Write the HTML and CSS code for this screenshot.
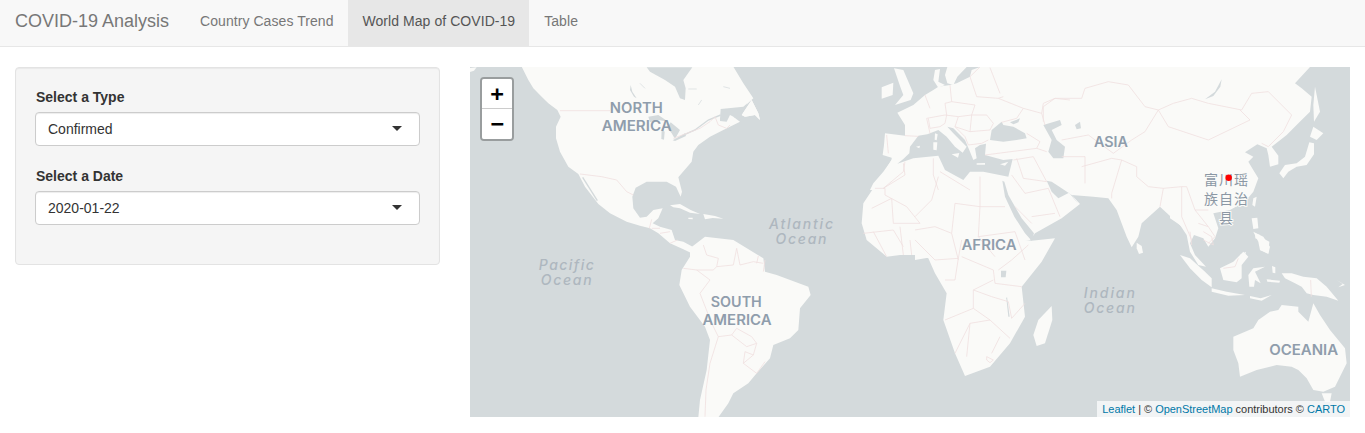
FILE: index.html
```html
<!DOCTYPE html>
<html lang="en">
<head>
<meta charset="utf-8">
<title>COVID-19 Analysis</title>
<link rel="stylesheet" href="styles.css">
</head>
<body>
<nav class="navbar">
  <span class="brand">COVID-19 Analysis</span>
  <ul class="nav">
    <li><a href="#">Country Cases Trend</a></li>
    <li class="active"><a href="#">World Map of COVID-19</a></li>
    <li><a href="#">Table</a></li>
  </ul>
</nav>
<main class="content">
  <aside class="well">
    <div class="field">
      <label>Select a Type</label>
      <div class="select"><span>Confirmed</span><i class="caret"></i></div>
    </div>
    <div class="field">
      <label>Select a Date</label>
      <div class="select"><span>2020-01-22</span><i class="caret"></i></div>
    </div>
  </aside>
  <section class="map">
    <svg class="world" viewBox="470 67 880 350" width="880" height="350" xmlns="http://www.w3.org/2000/svg">
      <rect class="sea" x="470" y="67" width="880" height="350"/>

      <!-- Americas -->
      <g class="land" transform="translate(470 60) scale(.33333)">
        <path d="M0,24 L20,22 12,32 0,36Z"/>
        <path d="M155,20 L175,60 190,85 215,110 235,130 262,150 272,170 258,200 258,235 270,275 295,320 325,342 345,380 385,432 420,460 470,485 510,497 540,505 565,520 600,550 640,568 662,578 668,560 640,545 615,540 605,510 570,500 548,490 565,475 578,445 550,450 530,470 510,473 490,445 487,410 497,383 530,365 590,365 618,380 632,410 636,395 625,352 665,305 670,275 685,255 720,230 760,210 810,185 790,170 850,115 820,70 790,20Z"/>
        <path d="M600,436 L630,432 662,450 690,462 660,458 630,445 610,442Z"/>
        <path d="M700,462 L735,468 760,476 728,474 705,478Z"/>
        <path d="M655,473 L668,473 668,478 655,477Z"/>
        <path d="M815,165 L845,120 865,160 870,180 855,165 825,170Z"/>
        <path d="M1235,82 L1270,68 1268,105 1235,116Z"/>
        <path d="M1272,25 L1300,30 1330,100 1322,120 1275,135 1300,105 1290,78Z"/>
      </g>
      <g class="water" transform="translate(630 65) scale(.33333)">
        <path d="M50,7 L60,20 105,45 135,65 150,100 165,105 167,70 160,45 187,7Z"/>
        <path d="M270,162 L272,132 340,125 352,115 335,150 330,165 300,150 290,170 270,168Z"/>
        <path d="M55,155 L85,150 115,170 85,165 60,172Z"/>
        <path d="M95,192 L104,200 102,224 94,222Z"/>
        <path d="M122,172 L150,195 135,222 125,205 112,188Z"/>
        <path d="M128,226 L165,205 168,213 135,228Z"/>
        <path d="M2,60 L7,80 20,100 12,95 0,75Z"/>
      </g>
      <g transform="translate(630 65) scale(.33333)">
        <path class="waterline" d="M272,150 L235,165 195,195 165,208"/>
        <path class="waterline thin" d="M175,72 L200,72"/>
        <path class="waterline thin" d="M280,65 L300,70"/>
        <path class="waterline thin" d="M205,120 L215,105"/>
        <path class="waterline thin" d="M30,55 L45,70"/>
      </g>
      <g class="land" transform="translate(630 65) scale(.33333)">
        <path d="M335,150 L365,105 385,145 390,165 375,150 345,155Z"/>
      </g>
      <g transform="translate(470 60) scale(.33333)">
        <path class="waterline" d="M338,352 L382,422"/>
        <path class="border" d="M270,152 L420,152"/>
        <path class="border" d="M610,235 L690,205 720,185 735,170 745,195 770,205 780,195"/>
        <path class="border" d="M330,342 L395,350 440,360 470,395 490,405"/>
        <path class="border" d="M538,505 L545,478 M545,505 L570,505 M570,520 L600,515 M600,550 L622,540"/>
      </g>
      <g class="land" transform="translate(470 230) scale(.33333)">
        <path d="M660,55 L705,20 790,30 880,85 885,125 920,135 1015,170 1022,195 990,235 985,300 960,325 910,345 900,385 860,430 835,460 790,490 775,520 745,562 685,562 690,510 710,420 720,330 705,290 660,230 628,165 635,120 660,80Z"/>
      </g>
      <g transform="translate(470 230) scale(.33333)">
        <path class="border" d="M700,45 L710,75 745,85 740,110 790,105 800,55"/>
        <path class="border" d="M800,55 L810,105 850,95 880,100"/>
        <path class="border" d="M640,115 L680,120 720,150 690,190 725,280"/>
        <path class="border" d="M725,280 L745,320 785,315 830,350 860,340 850,375 820,400 860,430 885,395"/>
        <path class="border" d="M785,315 L800,295 845,320 860,340"/>
        <path class="border" d="M745,320 L720,400 708,480 705,560"/>
        <path class="border" d="M820,400 L825,365 850,375"/>
        <path class="border" d="M680,120 L730,120 740,110"/>
        <path class="border" d="M860,100 L865,78 M880,125 L885,90"/>
      </g>

      <!-- Eurasia and Africa -->
      <g class="land" transform="translate(870 65) scale(.33333)">
        <path d="M45,205 L105,212 105,180 82,143 130,120 165,90 190,75 205,65 240,60 260,55 300,35 305,15 330,6 L640,6 640,375 L0,375 10,355 40,320 65,285 65,278 38,270 42,240Z"/>
        <path d="M232,6 L290,6 262,35 250,60 232,55 225,30Z"/>
        <path d="M195,15 L210,12 205,50 225,60 205,68 190,45Z"/>
      </g>
      <g class="land" transform="translate(915 60) scale(.33333)">
        <path d="M195,20 L800,20 800,500 735,440 680,490 670,530 650,562 635,530 605,450 580,415 535,410 470,405 495,432 440,475 360,520 345,540 0,600 0,300 195,150Z"/>
      </g>
      <g class="land" transform="translate(470 60) scale(.33333)">
        <path d="M1270,290 L1240,340 1210,385 1180,430 1175,490 1190,540 1250,590 1290,585 1350,585 1350,280Z"/>
      </g>
      <g class="land" transform="translate(915 230) scale(.33333)">
        <path d="M0,70 L40,85 60,130 95,190 85,270 120,370 150,438 225,410 285,340 330,260 320,170 380,95 420,25 350,32 0,0Z"/>
        <path d="M410,228 L412,270 390,340 365,348 355,315 370,270Z"/>
        <path d="M665,38 L680,48 684,68 672,72 665,55Z"/>
      </g>
      <g class="land" transform="translate(1170 65) scale(.33333)">
        <path d="M0,6 L420,6 375,55 395,70 425,95 420,140 385,175 350,210 305,245 325,272 325,298 300,305 295,270 290,250 262,238 225,262 250,275 235,290 248,312 265,340 250,380 225,410 180,435 130,445 145,490 135,520 115,545 100,520 72,510 60,535 75,570 108,605 85,600 60,560 50,510 30,480 0,460Z"/>
        <path d="M435,65 L450,140 432,170 430,120Z"/>
        <path d="M418,232 L432,235 432,268 410,300 380,305 355,320 340,340 328,325 345,300 380,295 405,275Z"/>
        <path d="M420,215 L430,185 460,205 440,225Z"/>
        <path d="M250,400 L260,395 255,425 247,420Z"/>
        <path d="M245,460 L262,458 265,490 250,492Z"/>
        <path d="M270,515 L298,530 295,565 270,555Z"/>
        <path d="M255,505 L270,510 268,525 256,520Z"/>
        <path d="M210,570 L228,560 225,572Z"/>
      </g>
      <g class="land" transform="translate(1170 230) scale(.33333)">
        <path d="M30,75 L60,85 105,125 125,145 125,172 95,150 60,115Z"/>
        <path d="M125,175 L170,185 225,195 175,197 125,185Z"/>
        <path d="M240,198 L272,205 305,195 275,212 240,205Z"/>
        <path d="M150,115 L190,95 220,65 235,80 215,105 215,145 200,157 160,150Z"/>
        <path d="M235,135 L250,115 285,110 255,125 272,160 255,150 252,170 238,170Z"/>
        <path d="M335,130 L365,130 400,140 440,145 470,170 505,212 470,200 430,195 410,190 395,170 375,160 345,145Z"/>
        <path d="M250,5 L280,20 300,50 295,72 270,60 265,35Z"/>
        <path d="M306,108 L316,112 316,130 308,128Z"/>
        <path d="M290,148 L330,152 328,158 292,155Z"/>
        <path d="M500,150 L525,165 505,172 518,162Z"/>
        <path d="M190,320 L250,295 265,270 300,245 325,240 335,225 385,230 385,245 415,275 430,220 450,255 480,300 525,355 530,400 495,470 460,485 430,480 410,445 395,430 385,420 365,410 320,405 260,420 210,440 205,400 190,360Z"/>
        <path d="M455,490 L485,490 480,515 465,515Z"/>
      </g>

      <!-- Seas -->
      <g class="water" transform="translate(870 65) scale(.33333)">
        <path d="M68,285 L82,296 100,282 118,265 120,245 145,212 172,208 205,195 230,215 255,245 280,265 272,272 290,245 250,205 232,185 250,190 285,225 300,260 310,285 320,280 315,250 330,240 348,236 345,270 400,285 428,282 415,335 340,320 300,320 280,345 225,315 205,272 130,280 82,296Z"/>
        <path d="M360,225 L365,195 395,170 400,180 430,185 465,205 470,220 440,225 400,230Z"/>
        <path d="M420,172 L450,160 445,172 430,178Z"/>
        <path d="M520,180 L570,165 575,180 545,195 560,225 585,245 580,280 550,280 535,260 545,225Z"/>
      </g>
      <g class="land" transform="translate(870 65) scale(.33333)">
        <path d="M195,205 L203,208 200,226 194,224Z"/>
        <path d="M190,232 L202,232 200,256 190,254Z"/>
        <path d="M245,268 L268,264 264,278Z"/>
        <path d="M320,295 L345,294 345,299 320,299Z"/>
        <path d="M390,298 L415,290 405,302Z"/>
        <path d="M138,245 L150,242 148,250Z"/>
      </g>
      <g class="water" transform="translate(915 60) scale(.33333)">
        <path d="M262,362 L268,365 280,405 320,475 357,520 350,542 330,520 298,470 270,410Z"/>
        <path d="M395,362 L410,395 430,415 462,398 490,432 470,405 440,385 410,365Z"/>
        <path d="M870,118 L900,95 920,58 916,80 895,108Z"/>
        <path d="M480,195 L495,185 498,205 485,208Z"/>
      </g>
      <g class="water" transform="translate(915 230) scale(.33333)">
        <path d="M258,122 L274,122 272,142 258,142Z"/>
        <path d="M276,200 L284,260 280,260 274,205Z"/>
      </g>

      <!-- Borders -->
      <g transform="translate(870 65) scale(.33333)">
        <path class="border" d="M50,210 L55,265 M105,212 L145,214 M170,160 L180,205 M170,160 L225,150 M225,115 L230,150 225,175 M165,90 L180,130 M240,60 L245,110 225,115 M245,110 L315,120 305,150 M300,35 L320,95 385,100 460,130 440,160 395,172 M330,6 L300,35 M385,100 400,95 M360,8 L390,85"/>
        <path class="border" d="M175,160 L180,190 210,185 225,175 M225,150 L265,155 305,150 350,150 370,175 360,195 M265,155 L255,185 285,215 M305,150 L300,200 360,195 M255,185 L300,200 M285,215 L295,240 335,235 355,225"/>
        <path class="border" d="M460,130 L515,145 520,115 555,100 600,105 M515,145 L525,180 M470,205 L510,230 500,250 530,260 M345,270 L500,250 M430,285 L490,275 M440,280 L460,340 530,350 M490,275 530,350"/>
        <path class="border" d="M105,290 L100,320 40,370 M190,280 L190,330 205,375 M210,320 L300,375"/>
      </g>
      <g transform="translate(915 60) scale(.33333)">
        <path class="border" d="M385,140 L420,115 500,115 510,85 580,65 640,75 690,140 730,150 775,130 830,115 880,130 980,150 1010,100 1060,95 1130,165 1105,215 1060,260 1040,250"/>
        <path class="border" d="M730,150 L760,200 880,240 1005,180 975,150"/>
        <path class="border" d="M385,140 L385,185 M440,240 L520,225 595,280 650,240 690,215 730,150"/>
        <path class="border" d="M440,290 L510,290 510,370 M500,320 L590,295 620,300 665,320 665,350 700,380 745,385 800,380 815,380 840,450 880,500 900,530 880,550"/>
        <path class="border" d="M620,300 L590,400 590,415 M800,380 L800,470 830,540 M745,385 L735,440 M840,450 L880,450 M850,490 L880,500"/>
        <path class="border" d="M70,350 L50,420 0,470 M195,350 L195,440 120,430 M270,440 L195,440 M120,430 L110,520 M195,440 L190,530 300,515 M300,440 L350,490 M350,470 L420,460 M290,345 L330,400 400,385 435,470"/>
        <path class="border" d="M0,510 L60,500 110,520 130,600 M190,530 L240,590 M300,515 L330,600"/>
      </g>
      <g transform="translate(470 60) scale(.33333)">
        <path class="border" d="M1215,385 L1245,385 1245,405 1310,440 1350,490 M1205,445 L1265,415 M1265,415 L1270,490 1350,490 M1180,520 L1270,510 1300,560 M1210,515 L1250,590 M1290,500 L1300,585 M1320,540 L1325,585 M1300,310 L1305,345 1240,385"/>
      </g>
      <g transform="translate(915 230) scale(.33333)">
        <path class="border" d="M0,30 L60,90 130,85 140,30 M130,85 L120,150 90,150 M140,80 L235,120 240,160 320,170 M235,150 L175,180 230,200 M175,180 L175,235 90,270 M230,200 L280,215 290,265 330,220 M175,235 L225,270 165,280 155,380 M225,270 L285,325 M165,280 L120,370 M255,320 L230,370 M215,380 L235,390 225,398 215,390Z M340,45 L290,90 250,120"/>
      </g>
      <g transform="translate(1170 230) scale(.33333)">
        <path class="border" d="M160,115 L195,110 205,85 M422,150 L424,200 M60,5 L65,45 M100,5 L125,20 130,45 100,30"/>
      </g>

      <!-- Labels -->
      <text class="continent" x="636.3" y="113.3" text-anchor="middle" textLength="53" lengthAdjust="spacingAndGlyphs">NORTH</text>
      <text class="continent" x="636.7" y="130.7" text-anchor="middle" textLength="70" lengthAdjust="spacingAndGlyphs">AMERICA</text>
      <text class="continent" x="1111" y="146.7" text-anchor="middle" textLength="34" lengthAdjust="spacingAndGlyphs">ASIA</text>
      <text class="continent" x="989" y="250" text-anchor="middle" textLength="55" lengthAdjust="spacingAndGlyphs">AFRICA</text>
      <text class="continent" x="736.3" y="307.3" text-anchor="middle" textLength="51" lengthAdjust="spacingAndGlyphs">SOUTH</text>
      <text class="continent" x="737" y="324.7" text-anchor="middle" textLength="69" lengthAdjust="spacingAndGlyphs">AMERICA</text>
      <text class="continent" x="1303.7" y="355" text-anchor="middle" textLength="69" lengthAdjust="spacingAndGlyphs">OCEANIA</text>
      <text class="ocean" x="801" y="229.3" text-anchor="middle" textLength="64" lengthAdjust="spacing">Atlantic</text>
      <text class="ocean" x="801" y="244.3" text-anchor="middle" textLength="51" lengthAdjust="spacing">Ocean</text>
      <text class="ocean" x="566.3" y="270" text-anchor="middle" textLength="55" lengthAdjust="spacing">Pacific</text>
      <text class="ocean" x="566.2" y="285.3" text-anchor="middle" textLength="51" lengthAdjust="spacing">Ocean</text>
      <text class="ocean" x="1109.3" y="297.7" text-anchor="middle" textLength="51" lengthAdjust="spacing">Indian</text>
      <text class="ocean" x="1109.3" y="312.7" text-anchor="middle" textLength="51" lengthAdjust="spacing">Ocean</text>
      <text class="place" x="1226.5" y="185" text-anchor="middle">富川瑶</text>
      <text class="place" x="1226.5" y="204" text-anchor="middle">族自治</text>
      <text class="place" x="1226.5" y="223" text-anchor="middle">县</text>
      <circle class="marker" cx="1228.7" cy="177.7" r="3.2"/>
    </svg>
    <div class="zoom">
      <a href="#" class="zoom-btn">+</a>
      <a href="#" class="zoom-btn">−</a>
    </div>
    <div class="attribution"><a href="#">Leaflet</a> | © <a href="#">OpenStreetMap</a> contributors © <a href="#">CARTO</a></div>
  </section>
</main>
</body>
</html>
```

FILE: styles.css
```css
* { box-sizing: border-box; }
html, body { margin: 0; padding: 0; }
body {
  background: #fff;
  color: #333;
  font-family: "Liberation Sans", Arial, sans-serif;
  font-size: 14px;
  line-height: 20px;
  overflow: hidden;
}
a { text-decoration: none; }

.navbar {
  display: flex;
  height: 47px;
  background: #f8f8f8;
  border-bottom: 1px solid #e7e7e7;
  margin-bottom: 20px;
}
.brand {
  padding: 11px 16px 11px 15px;
  font-size: 18px;
  line-height: 20px;
  color: #777;
}
.nav {
  display: flex;
  margin: 0;
  padding: 0;
  list-style: none;
  letter-spacing: .06px;
}
.nav a {
  display: block;
  padding: 11px 14px 11px 15px;
  height: 46px;
  color: #777;
}
.nav .active a {
  background: #e7e7e7;
  color: #555;
}

.content {
  display: flex;
  gap: 30px;
  padding: 0 15px;
}
.well {
  flex: 0 0 425px;
  height: 198px;
  padding: 19px 19px 19px 20px;
  background: #f5f5f5;
  border: 1px solid #e3e3e3;
  border-radius: 4px;
  box-shadow: inset 0 1px 1px rgba(0, 0, 0, .05);
}
.field { margin-bottom: 20px; }
.field label {
  display: block;
  margin-bottom: 5px;
  font-weight: 700;
}
.select {
  display: flex;
  align-items: center;
  justify-content: space-between;
  height: 34px;
  margin-left: -1px;
  padding: 0 17px 0 12px;
  background: #fff;
  border: 1px solid #ccc;
  border-radius: 4px;
  box-shadow: inset 0 1px 1px rgba(0, 0, 0, .075);
}
.caret {
  display: block;
  margin-top: -2px;
  border-style: solid;
  border-width: 5px 5px 0;
  border-color: #333 transparent transparent;
}

.map {
  position: relative;
  flex: 1;
  height: 350px;
  overflow: hidden;
}
.world { display: block; }
.sea, .water path { fill: #d4dadc; }
.land path { fill: #fafaf8; }
.waterline {
  fill: none;
  stroke: #d4dadc;
  stroke-width: 1.4px;
  vector-effect: non-scaling-stroke;
}
.waterline.thin { stroke-width: .7px; }
.border {
  fill: none;
  stroke: #f0dfdf;
  stroke-width: .8px;
  vector-effect: non-scaling-stroke;
}
.continent {
  font-family: Inter, "Liberation Sans", sans-serif;
  font-size: 14px;
  font-weight: 600;
  fill: #8f9dac;
}
.ocean {
  font-family: Inter, "Liberation Sans", sans-serif;
  font-size: 14px;
  font-style: italic;
  font-weight: 500;
  fill: #aeb7bf;
}
.place {
  font-family: "Noto Sans CJK SC", sans-serif;
  font-size: 14px;
  letter-spacing: 1px;
  fill: #8b97a4;
  stroke: #fafaf8;
  stroke-width: 2px;
  paint-order: stroke;
}
.marker { fill: #ff0000; }

.zoom {
  position: absolute;
  top: 10px;
  left: 10px;
  border: 2px solid rgba(0, 0, 0, .28);
  border-radius: 4px;
  background-clip: padding-box;
}
.zoom-btn {
  display: block;
  width: 30px;
  height: 30px;
  background: #fff;
  border-bottom: 1px solid #ccc;
  color: #000;
  font-family: "DejaVu Sans Mono", monospace;
  font-size: 22px;
  font-weight: 700;
  line-height: 30px;
  text-align: center;
}
.zoom-btn:first-child { border-radius: 2px 2px 0 0; }
.zoom-btn:last-child {
  border-bottom: 0;
  border-radius: 0 0 2px 2px;
}
.attribution {
  position: absolute;
  right: 0;
  bottom: 0;
  padding: 0 5px;
  background: rgba(255, 255, 255, .7);
  color: #333;
  font-size: 11px;
  line-height: 16px;
  letter-spacing: -.02px;
}
.attribution a { color: #0078a8; }
```
